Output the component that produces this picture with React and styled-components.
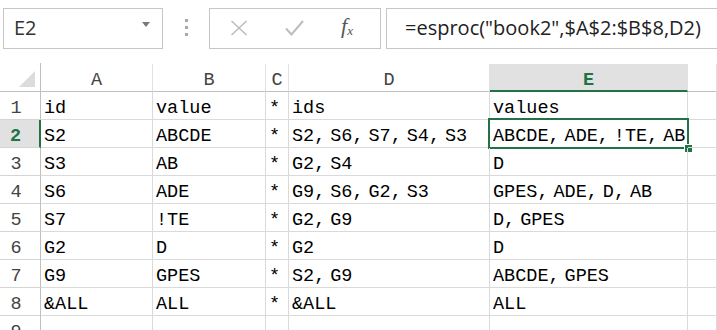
import React from "react";
import styled, { createGlobalStyle } from "styled-components";

const GlobalStyle = createGlobalStyle`
  html, body {
    margin: 0;
    padding: 0;
    background: #fff;
    overflow: hidden;
  }
  body {
    font-family: "Liberation Mono", "DejaVu Sans Mono", monospace;
  }
`;

const GREEN = "#217346";

const columns = ["A", "B", "C", "D", "E", ""];
const activeCol = "E";
const activeRow = 2;

const rows = [
  ["id", "value", "*", "ids", "values"],
  ["S2", "ABCDE", "*", "S2, S6, S7, S4, S3", "ABCDE, ADE, !TE, AB"],
  ["S3", "AB", "*", "G2, S4", "D"],
  ["S6", "ADE", "*", "G9, S6, G2, S3", "GPES, ADE, D, AB"],
  ["S7", "!TE", "*", "G2, G9", "D, GPES"],
  ["G2", "D", "*", "G2", "D"],
  ["G9", "GPES", "*", "S2, G9", "ABCDE, GPES"],
  ["&ALL", "ALL", "*", "&ALL", "ALL"],
  ["", "", "", "", ""],
];

function withSeparators(text) {
  const parts = text.split(", ");
  return parts.map((p, i) => (
    <React.Fragment key={i}>
      {p}
      {i < parts.length - 1 && <Sep>, </Sep>}
    </React.Fragment>
  ));
}

export default function App() {
  return (
    <Page>
      <GlobalStyle />
      <FormulaBar>
        <NameBox>
          E2
          <Caret />
        </NameBox>
        <Grip>
          <Dot />
          <Dot />
          <Dot />
        </Grip>
        <FxBox>
          <svg width="18" height="16" viewBox="0 0 18 16">
            <path d="M1.5 1 L16.5 15 M16.5 1 L1.5 15" stroke="#bdbdbd" strokeWidth="1.6" fill="none" />
          </svg>
          <svg width="19" height="16" viewBox="0 0 19 16">
            <path d="M1 8.5 L6.5 14.5 L18 1" stroke="#bdbdbd" strokeWidth="2" fill="none" />
          </svg>
          <FxLabel>
            f<sub>x</sub>
          </FxLabel>
        </FxBox>
        <FormulaInput>=esproc("book2",$A$2:$B$8,D2)</FormulaInput>
      </FormulaBar>

      <Sheet>
        <Corner>
          <Triangle />
        </Corner>
        {columns.map((c, i) => (
          <ColHeader key={i} $active={c === activeCol}>
            {c}
          </ColHeader>
        ))}
        {rows.map((row, r) => (
          <React.Fragment key={r}>
            <RowHeader $active={r + 1 === activeRow}>{r + 1}</RowHeader>
            {row.map((val, c) => {
              const selected = r + 1 === activeRow && columns[c] === activeCol;
              return (
                <Cell key={c}>
                  <CellText>{withSeparators(val)}</CellText>
                  {selected && (
                    <Selection>
                      <FillHandle />
                    </Selection>
                  )}
                </Cell>
              );
            })}
            <Cell />
          </React.Fragment>
        ))}
      </Sheet>
    </Page>
  );
}

const Page = styled.div`
  width: 717px;
  height: 330px;
  overflow: hidden;
  background: #fff;
`;

const FormulaBar = styled.div`
  display: flex;
  align-items: flex-start;
  height: 63px;
  padding: 8px 0 0 3px;
  box-sizing: border-box;
  font-family: "Open Sans", "Noto Sans", sans-serif;
`;

const NameBox = styled.div`
  width: 160px;
  height: 41px;
  box-sizing: border-box;
  border: 1px solid #c6c6c6;
  display: flex;
  align-items: center;
  padding: 0 12px 2px 10px;
  font-size: 20px;
  color: #333;
`;

const Caret = styled.span`
  margin-left: auto;
  margin-top: -6px;
  width: 0;
  height: 0;
  border-left: 4px solid transparent;
  border-right: 4px solid transparent;
  border-top: 5px solid #7a7a7a;
`;

const Grip = styled.div`
  width: 46px;
  height: 41px;
  display: flex;
  flex-direction: column;
  align-items: center;
  justify-content: center;
  gap: 4px;
  padding-bottom: 3px;
  box-sizing: border-box;
`;

const Dot = styled.span`
  width: 3px;
  height: 3px;
  background: #a8a8a8;
`;

const FxBox = styled.div`
  width: 172px;
  height: 41px;
  box-sizing: border-box;
  border: 1px solid #c6c6c6;
  display: flex;
  align-items: center;
  gap: 37px;
  padding: 0 0 1px 20px;
`;

const FxLabel = styled.span`
  font-family: "Liberation Serif", serif;
  font-style: italic;
  font-size: 22px;
  color: #555;
  margin-top: -4px;

  sub {
    font-size: 13px;
    vertical-align: -2px;
  }
`;

const FormulaInput = styled.div`
  flex: 1;
  margin: 0 -4px 0 5px;
  height: 41px;
  box-sizing: border-box;
  border: 1px solid #c6c6c6;
  display: flex;
  align-items: center;
  padding: 0 0 3px 18px;
  font-size: 20px;
  color: #222;
  white-space: nowrap;
`;

const Sheet = styled.div`
  display: grid;
  grid-template-columns: 41px 112px 113px 23px 201px 198px 1fr;
  grid-template-rows: 29px repeat(9, 28px);
  font-size: 18.5px;
  color: #000;
`;

const Corner = styled.div`
  border-right: 1px solid #c0c0c0;
  border-bottom: 1px solid #c0c0c0;
  display: flex;
  align-items: flex-end;
  justify-content: flex-end;
  padding: 0 5px 4px 0;
`;

const Triangle = styled.span`
  width: 0;
  height: 0;
  border-left: 16px solid transparent;
  border-bottom: 16px solid #dcdcdc;
`;

const ColHeader = styled.div`
  border-right: 1px solid #e1e1e1;
  border-bottom: ${(p) => (p.$active ? `2px solid ${GREEN}` : "1px solid #c0c0c0")};
  background: ${(p) => (p.$active ? "#e1e1e1" : "#fff")};
  margin-top: 1px;
  color: ${(p) => (p.$active ? GREEN : "#444")};
  font-weight: ${(p) => (p.$active ? 700 : 400)};
  text-align: center;
  line-height: 22px;
  padding-top: 6px;
  box-sizing: border-box;
`;

const RowHeader = styled.div`
  border-right: ${(p) => (p.$active ? `2px solid ${GREEN}` : "1px solid #c0c0c0")};
  border-bottom: 1px solid #d4d4d4;
  background: ${(p) => (p.$active ? "#e1e1e1" : "#fff")};
  color: ${(p) => (p.$active ? GREEN : "#444")};
  font-weight: ${(p) => (p.$active ? 700 : 400)};
  text-align: center;
  padding: 6px 8px 0 0;
  line-height: 22px;
  box-sizing: border-box;
  overflow: hidden;
`;

const Cell = styled.div`
  position: relative;
  min-width: 0;
  border-right: 1px solid #dadada;
  border-bottom: 1px solid #dadada;
  padding: 6px 0 0 3px;
  line-height: 22px;
`;

const CellText = styled.div`
  overflow: hidden;
  white-space: nowrap;
`;

const Sep = styled.span`
  letter-spacing: -3.1px;
`;

const Selection = styled.div`
  position: absolute;
  top: -2px;
  left: -2px;
  right: -2px;
  bottom: -2px;
  border: 2px solid ${GREEN};
  pointer-events: none;
`;

const FillHandle = styled.span`
  position: absolute;
  right: -6px;
  bottom: -6px;
  width: 7px;
  height: 7px;
  background: ${GREEN};
  border: 1px solid #fff;
`;
